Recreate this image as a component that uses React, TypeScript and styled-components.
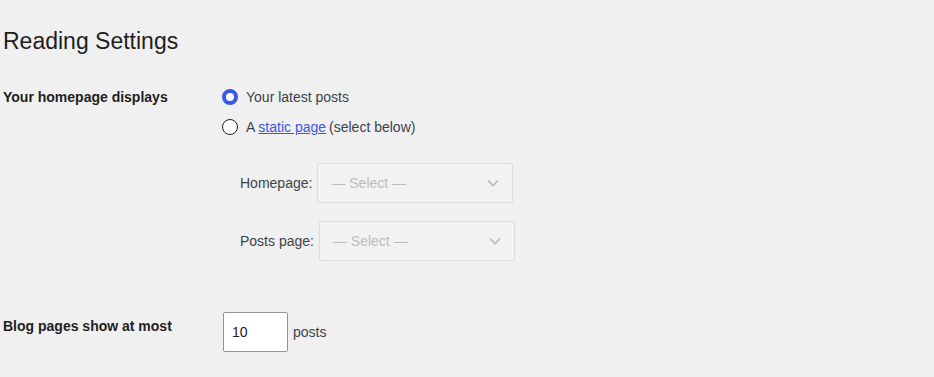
import React from "react";
import styled, { createGlobalStyle } from "styled-components";

const Global = createGlobalStyle`
  html, body { margin: 0; padding: 0; background: #f0f0f1; }
  body { font-family: "Liberation Sans", Arial, sans-serif; color: #1e1e1e; font-size: 14px; }
`;

const Page = styled.div`
  padding: 0 0 0 3px;
  width: 931px;
  height: 377px;
  overflow: hidden;
`;

const Title = styled.h1`
  margin: 0;
  padding: 27px 0 0;
  font-size: 23px;
  font-weight: 400;
  line-height: 29px;
  color: #1e1e1e;
`;

const Table = styled.div`
  display: grid;
  grid-template-columns: 219px 1fr;
  margin-top: 23px;
`;

const Th = styled.div<{ $pt: number }>`
  font-weight: 700;
  font-size: 14px;
  line-height: 20px;
  padding-top: ${(p) => p.$pt}px;
`;

const Td = styled.div<{ $pt: number }>`
  padding-top: ${(p) => p.$pt}px;
`;

const RadioRow = styled.label`
  display: flex;
  align-items: center;
  height: 20px;
  margin-bottom: 10px;
  color: #3c434a;
  font-size: 14px;
`;

const Radio = styled.span<{ $checked?: boolean }>`
  box-sizing: border-box;
  width: 16px;
  height: 16px;
  border-radius: 50%;
  margin-right: 8px;
  background: #fff;
  border: ${(p) => (p.$checked ? "4px solid #3858e9" : "1px solid #1e1e1e")};
`;

const Link = styled.a`
  color: #3858e9;
  text-decoration: underline;
  margin: 0 3px;
`;

const SubList = styled.div`
  padding: 16px 0 0 18px;
  display: flex;
  flex-direction: column;
  gap: 18px;
`;

const SelectRow = styled.div`
  display: flex;
  align-items: center;
  gap: 5px;
  color: #3c434a;
`;

const Select = styled.div`
  box-sizing: border-box;
  width: 196px;
  height: 40px;
  border: 1px solid #dcdcde;
  border-radius: 2px;
  background: #f2f2f2;
  display: flex;
  align-items: center;
  justify-content: space-between;
  padding: 0 13px 0 13px;
  color: #bcbcbc;
  font-size: 14px;
`;

const NumberInput = styled.div`
  box-sizing: border-box;
  width: 65px;
  height: 40px;
  border: 1px solid #949494;
  border-radius: 2px;
  background: #fff;
  display: flex;
  align-items: center;
  padding: 0 8px;
  color: #1e1e1e;
  font-size: 14px;
`;

const InputRow = styled.div`
  display: flex;
  align-items: center;
  gap: 5px;
  color: #3c434a;
  margin-left: 1px;
`;

const Chevron = () => (
  <svg width="12" height="8" viewBox="0 0 12 8" fill="none">
    <path d="M1 1.5l5 5 5-5" stroke="#b8b8b8" strokeWidth="1.6" />
  </svg>
);

export default function App() {
  return (
    <>
      <Global />
      <Page>
        <Title>Reading Settings</Title>
        <Table>
          <Th $pt={8}>Your homepage displays</Th>
          <Td $pt={8}>
            <RadioRow>
              <Radio $checked />
              Your latest posts
            </RadioRow>
            <RadioRow>
              <Radio />
              A<Link href="#">static page</Link>(select below)
            </RadioRow>
            <SubList>
              <SelectRow>
                Homepage:
                <Select>
                  — Select —
                  <Chevron />
                </Select>
              </SelectRow>
              <SelectRow>
                Posts page:
                <Select>
                  — Select —
                  <Chevron />
                </Select>
              </SelectRow>
            </SubList>
          </Td>
          <Th $pt={55}>Blog pages show at most</Th>
          <Td $pt={51}>
            <InputRow>
              <NumberInput>10</NumberInput>
              posts
            </InputRow>
          </Td>
        </Table>
      </Page>
    </>
  );
}
